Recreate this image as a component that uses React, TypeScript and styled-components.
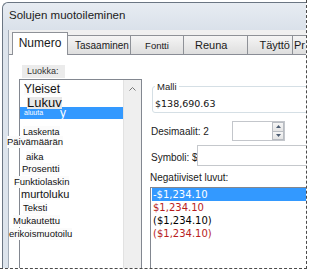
import React from "react";
import styled, { createGlobalStyle } from "styled-components";

const GlobalStyle = createGlobalStyle`
  html, body {
    margin: 0;
    padding: 0;
    background: #ffffff;
  }
  body {
    font-family: "Liberation Sans", Arial, sans-serif;
    color: #111;
  }
`;

const Crop = styled.div`
  width: 306px;
  height: 268px;
  border-right: 1px dashed #4a4a4a;
  border-bottom: 1px dashed #4a4a4a;
  overflow: hidden;
  background: #fff;
`;

const Window = styled.div`
  margin: 2px 0 0 2px;
  height: 266px;
  display: flex;
  flex-direction: column;
  border-left: 1px solid #6b7683;
  border-top: 1px solid #6b7683;
  border-top-left-radius: 6px;
  background: #dde4ec;
`;

const TitleBar = styled.div`
  height: 27px;
  box-sizing: border-box;
  padding: 6px 0 0 6px;
  font-size: 11.5px;
  line-height: 13px;
  color: #1b1b1b;
  background: linear-gradient(#e7ecf2, #dae1ea);
  border-top-left-radius: 6px;
`;

const Body = styled.div`
  flex: 1;
  min-height: 0;
  margin-left: 5px;
  border-left: 1px solid #a3acb7;
  background: #f0f0f0;
  display: flex;
  flex-direction: column;
`;

const TabRow = styled.div`
  height: 24px;
  display: flex;
  align-items: flex-end;
  padding-left: 3px;
  flex-shrink: 0;
`;

const Tab = styled.div<{
  $w: number;
  $active?: boolean;
  $size: number;
  $align?: string;
  $pad?: number;
}>`
  position: relative;
  box-sizing: border-box;
  width: ${({ $w }) => $w}px;
  flex-shrink: 0;
  height: ${({ $active }) => ($active ? 23 : 19)}px;
  margin-bottom: ${({ $active }) => ($active ? -1 : 0)}px;
  margin-right: -1px;
  z-index: ${({ $active }) => ($active ? 1 : 0)};
  border: 1px solid #8e9197;
  border-bottom: none;
  background: ${({ $active }) =>
    $active ? "#ffffff" : "linear-gradient(#f5f5f5, #dedede)"};
  display: flex;
  align-items: center;
  justify-content: ${({ $align }) => $align || "center"};
  padding: ${({ $active }) => ($active ? "0 0 2px" : "0")};
  padding-left: ${({ $pad }) => $pad || 0}px;
  padding-right: ${({ $align }) => ($align === "flex-end" ? 2 : 0)}px;
  font-size: ${({ $size }) => $size}px;
  color: #1a1a1a;
  white-space: nowrap;
  overflow: hidden;
`;

const Pane = styled.div`
  flex: 1;
  min-height: 0;
  background: #ffffff;
  border-top: 1px solid #898c95;
  display: flex;
`;

const LeftCol = styled.div`
  width: 133px;
  flex-shrink: 0;
  box-sizing: border-box;
  padding: 10px 0 0 10px;
  display: flex;
  flex-direction: column;
`;

const GroupLabel = styled.div`
  align-self: flex-start;
  margin-left: 3px;
  height: 13px;
  line-height: 13px;
  padding: 0 6px 0 5px;
  font-size: 9px;
  color: #333;
  background: #ebebeb;
`;

const ListBox = styled.div`
  margin-top: 1px;
  flex: 1;
  display: flex;
  border: 1px solid #828790;
  background: #fff;
`;

const ListBody = styled.div`
  flex: 1;
  padding-top: 2px;
`;

const Item = styled.div<{ $h: number }>`
  height: ${({ $h }) => $h}px;
  line-height: 12px;
  white-space: nowrap;
`;

const ItemText = styled.span<{ $x: number; $size: number; $shade?: boolean }>`
  display: inline-block;
  margin-left: ${({ $x }) => $x}px;
  font-size: ${({ $size }) => $size}px;
  color: #111;
  background: ${({ $shade }) => ($shade ? "#e8e8e8" : "#fbfbfb")};
`;

const Band = styled.div`
  height: 12px;
  line-height: 12px;
  margin-top: -6px;
  background: #3399ff;
  color: #fff;
  display: flex;
  align-items: center;
  white-space: nowrap;
`;

const BandSmall = styled.span`
  font-size: 7px;
  margin-left: 4px;
  width: 36px;
`;

const BandBig = styled.span`
  font-size: 12px;
`;

const ScrollTrack = styled.div`
  width: 17px;
  background: #efefef;
  border-left: 1px solid #e2e2e2;
  display: flex;
  flex-direction: column;
  align-items: center;
`;

const ScrollArrow = styled.div`
  height: 17px;
  display: flex;
  align-items: center;
  justify-content: center;
`;

const RightCol = styled.div`
  flex: 1;
  min-width: 0;
  padding: 26px 0 0 8px;
  display: flex;
  flex-direction: column;
`;

const Group = styled.fieldset`
  margin: 0 -20px 0 2px;
  min-width: 0;
  padding: 4px 0 0 2px;
  border: 1px solid #d5dfe5;
  border-radius: 3px;
`;

const Legend = styled.legend`
  padding: 0 2px;
  font-size: 9.5px;
  line-height: 11px;
  color: #222;
`;

const Sample = styled.div`
  height: 16px;
  line-height: 16px;
  font-family: "DejaVu Sans", Verdana, sans-serif;
  font-size: 9.5px;
  color: #111;
`;

const FieldRow = styled.div<{ $top: number }>`
  margin-top: ${({ $top }) => $top}px;
  display: flex;
  align-items: center;
  flex-shrink: 0;
`;

const FieldLabel = styled.div<{ $w: number; $drop?: number }>`
  width: ${({ $w }) => $w}px;
  flex-shrink: 0;
  padding-left: 1px;
  padding-top: ${({ $drop }) => $drop || 0}px;
  font-size: 10px;
  color: #1a1a1a;
  white-space: nowrap;
`;

const Spinner = styled.div`
  width: 53px;
  height: 20px;
  box-sizing: border-box;
  border: 1px solid #c3c6cb;
  display: flex;
  justify-content: flex-end;
`;

const SpinButtons = styled.div`
  width: 12px;
  display: flex;
  flex-direction: column;
`;

const SpinHalf = styled.div`
  flex: 1;
  border: 1px solid #b8bcc2;
  background: linear-gradient(#f6f6f6, #e4e4e4);
  display: flex;
  align-items: center;
  justify-content: center;
  & + & {
    border-top: none;
  }
`;

const TextInput = styled.div`
  flex: 1;
  height: 21px;
  margin-right: -20px;
  box-sizing: border-box;
  border: 1px solid #c5c8cc;
`;

const NegLabel = styled.div`
  margin-top: 6px;
  padding-left: 0;
  font-size: 10px;
  line-height: 12px;
  color: #1a1a1a;
`;

const NegList = styled.div`
  margin: 3px -20px 0 0;
  flex: 1;
  border: 1px solid #828790;
  padding: 0 0 0 1px;
`;

const NegRow = styled.div<{ $color: string; $sel?: boolean }>`
  height: 13px;
  line-height: 13px;
  padding-left: 1px;
  font-family: "DejaVu Sans", Verdana, sans-serif;
  font-size: 10px;
  color: ${({ $sel, $color }) => ($sel ? "#fff" : $color)};
  background: ${({ $sel }) => ($sel ? "#3399ff" : "transparent")};
`;

const tabs = [
  { label: "Numero", w: 56, size: 12, active: true },
  { label: "Tasaaminen", w: 64, size: 10, align: "flex-start", pad: 7 },
  { label: "Fontti", w: 54, size: 9.5 },
  { label: "Reuna", w: 65, size: 11, align: "flex-start", pad: 11 },
  { label: "Täyttö", w: 46, size: 11, align: "flex-end" },
  { label: "Pr", w: 30, size: 11, align: "flex-start", pad: 1 },
];

// x is relative to the list's inner left edge (x = 20 on the page)
const categories = [
  { text: "Yleiset", h: 14, x: 4, size: 12 },
  { text: "Lukuv", h: 11, x: 7, size: 13, shade: true },
  { text: "", h: 17, x: 0, size: 0, selected: true },
  { text: "Laskenta", h: 10, x: 3, size: 9 },
  { text: "Päivämäärän", h: 15, x: -13, size: 9.5 },
  { text: "aika", h: 12, x: 6, size: 9.5 },
  { text: "Prosentti", h: 13, x: 2, size: 9.5 },
  { text: "Funktiolaskin", h: 13, x: -6, size: 9.5 },
  { text: "murtoluku", h: 13, x: 1, size: 11 },
  { text: "Teksti", h: 13, x: 3, size: 9.5 },
  { text: "Mukautettu", h: 13, x: -7, size: 9.5 },
  { text: "erikoismuotoilu", h: 13, x: -11, size: 9.5 },
];

const negatives = [
  { text: "-$1,234.10", color: "#000", sel: true },
  { text: "$1,234.10", color: "#b81d1d" },
  { text: "($1,234.10)", color: "#000" },
  { text: "($1,234.10)", color: "#b81d1d" },
];

function Chevron({ down }: { down?: boolean }) {
  return (
    <svg width="7" height="4" viewBox="0 0 7 4">
      <path
        d={down ? "M0.5 0.5 L3.5 3.5 L6.5 0.5" : "M0.5 3.5 L3.5 0.5 L6.5 3.5"}
        fill="none"
        stroke="#777"
        strokeWidth="1"
      />
    </svg>
  );
}

function Triangle({ down }: { down?: boolean }) {
  return (
    <svg width="5" height="3" viewBox="0 0 5 3">
      <path d={down ? "M0 0 H5 L2.5 3 Z" : "M0 3 H5 L2.5 0 Z"} fill="#4d5d73" />
    </svg>
  );
}

export default function App() {
  return (
    <>
      <GlobalStyle />
      <Crop>
        <Window>
          <TitleBar>Solujen muotoileminen</TitleBar>
          <Body>
            <TabRow>
              {tabs.map((t) => (
                <Tab
                  key={t.label}
                  $w={t.w}
                  $active={t.active}
                  $size={t.size}
                  $align={t.align}
                  $pad={t.pad}
                >
                  {t.label}
                </Tab>
              ))}
            </TabRow>
            <Pane>
              <LeftCol>
                <GroupLabel>Luokka:</GroupLabel>
                <ListBox>
                  <ListBody>
                    {categories.map((c, i) =>
                      c.selected ? (
                        <Item key={i} $h={c.h}>
                          <Band style={{ marginTop: 0 }}>
                            <BandSmall>aluuta</BandSmall>
                            <BandBig>y</BandBig>
                          </Band>
                        </Item>
                      ) : (
                        <Item key={i} $h={c.h}>
                          <ItemText $x={c.x} $size={c.size} $shade={c.shade}>
                            {c.text}
                          </ItemText>
                        </Item>
                      )
                    )}
                  </ListBody>
                  <ScrollTrack>
                    <ScrollArrow>
                      <Chevron />
                    </ScrollArrow>
                  </ScrollTrack>
                </ListBox>
              </LeftCol>
              <RightCol>
                <Group>
                  <Legend>Malli</Legend>
                  <Sample>$138,690.63</Sample>
                </Group>
                <FieldRow $top={8}>
                  <FieldLabel $w={81}>Desimaalit: 2</FieldLabel>
                  <Spinner>
                    <SpinButtons>
                      <SpinHalf>
                        <Triangle />
                      </SpinHalf>
                      <SpinHalf>
                        <Triangle down />
                      </SpinHalf>
                    </SpinButtons>
                  </Spinner>
                </FieldRow>
                <FieldRow $top={4}>
                  <FieldLabel $w={46} $drop={4}>
                    Symboli: $
                  </FieldLabel>
                  <TextInput />
                </FieldRow>
                <NegLabel>Negatiiviset luvut:</NegLabel>
                <NegList>
                  {negatives.map((n, i) => (
                    <NegRow key={i} $color={n.color} $sel={n.sel}>
                      {n.text}
                    </NegRow>
                  ))}
                </NegList>
              </RightCol>
            </Pane>
          </Body>
        </Window>
      </Crop>
    </>
  );
}
